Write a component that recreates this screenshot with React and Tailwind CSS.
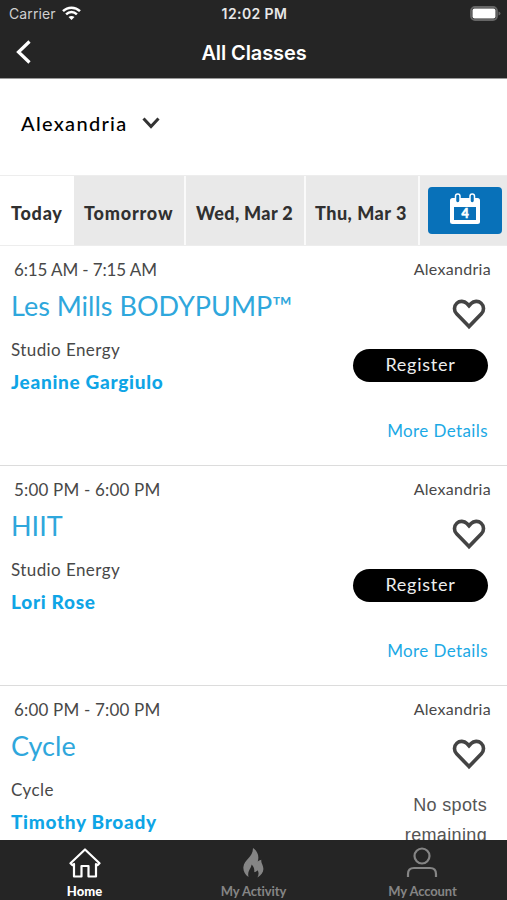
import React from "react";

const classes = [
  { time: "6:15 AM - 7:15 AM", timeGap: "tracking-[-0.12px]", name: "Les Mills BODYPUMP™", room: "Studio Energy", coach: "Jeanine Gargiulo", open: true },
  { time: "5:00 PM - 6:00 PM", timeGap: "tracking-[0.18px]", name: "HIIT", room: "Studio Energy", coach: "Lori Rose", open: true },
  { time: "6:00 PM - 7:00 PM", timeGap: "tracking-[0.18px]", name: "Cycle", room: "Cycle", coach: "Timothy Broady", open: false },
];

function Heart() {
  return (
    <svg className="mr-[5px] mt-[18px] h-[32px] w-[34px]" viewBox="0 0 34 32" fill="none" stroke="#444" strokeWidth="3.6" strokeLinejoin="miter">
      <path d="M17 28.6 4.6 15.8C1.7 12.7 1.8 8.1 4.8 5.3c2.9-2.7 7.4-2.500 10.1.3L17 7.800l2.100-2.200c2.700-2.800 7.200-3 10.100-.3 3 2.800 3.100 7.400.2 10.500Z" />
    </svg>
  );
}

function ClassRow({ item }) {
  return (
    <section className="flex h-[220px] shrink-0 justify-between border-b border-[#dcdcdc] pl-[11px] pr-[16px] text-[#484848]">
      <div className="flex flex-col whitespace-nowrap">
        <div className={"ml-[3px] mt-[13px] h-[22px] text-[17px] leading-[22px] " + item.timeGap}>{item.time}</div>
        <div className="mt-[8px] h-[34px] text-[27px] leading-[34px] text-[#2fa7dc]">{item.name}</div>
        <div className="mt-[16px] h-[22px] text-[17px] leading-[22px] tracking-[0.42px]">{item.room}</div>
        <div className="mt-[9px] h-[24px] text-[19px] font-black leading-[24px] tracking-[0.7px] text-[#0fa5e6]">{item.coach}</div>
      </div>
      <div className="flex flex-col items-end whitespace-nowrap">
        <div className="mt-[12px] h-[22px] text-[16px] leading-[22px] tracking-[0.3px]">Alexandria</div>
        <Heart />
        {item.open ? (
          <>
            <button className="mr-[3px] mt-[19px] h-[33px] w-[135px] rounded-full bg-black pb-[2px] text-[18px] leading-[31px] tracking-[0.75px] text-[#eee]">Register</button>
            <div className="mr-[3px] mt-[38px] h-[22px] text-[17px] leading-[22px] tracking-[0.4px] text-[#1ba9e5]">More Details</div>
          </>
        ) : (
          <div className="mr-[4px] mt-[20px] w-[100px] whitespace-normal text-right font-['Liberation_Sans',sans-serif] text-[18px] leading-[30px] tracking-[0.35px] text-[#555]">No spots remaining</div>
        )}
      </div>
    </section>
  );
}

export default function App() {
  return (
    <div className="flex h-[900px] w-[507px] flex-col overflow-hidden bg-white font-['Lato',sans-serif]">
      <header className="h-[79px] shrink-0 bg-[#252525] font-['Inter',sans-serif] text-white">
        <div className="grid h-[27px] grid-cols-3 items-center pl-[9px] pr-[8px] text-[14px]">
          <div className="flex items-center gap-[6px] text-[#d0d0d0]">
            <span className="tracking-[0.1px]">Carrier</span>
            <svg width="19" height="15" viewBox="0 0 19 15" fill="none" stroke="white" strokeWidth="2.500">
              <path d="M1 5.200c4.800-4.700 12.200-4.700 17 0M4.100 8.300c3.100-3 7.700-3 10.800 0" />
              <path d="m6.500 11 3 3 3-3c-1.700-1.500-4.300-1.500-6 0Z" fill="white" stroke="none" />
            </svg>
          </div>
          <div className="pl-px text-center font-semibold tracking-[0.4px] text-[#e8e8e8]">12:02 PM</div>
          <svg className="-mr-[2px] justify-self-end" width="31" height="15" viewBox="0 0 31 15">
            <rect x="1" y="1" width="26" height="13" rx="4" fill="none" stroke="#666" strokeWidth="1.800" />
            <rect x="2.500" y="2.500" width="23" height="10" rx="2" fill="white" />
            <path d="M28.500 5.500v4q2-.6 2-2t-2-2" fill="#666" />
          </svg>
        </div>
        <div className="grid h-[51px] grid-cols-[60px_1fr_60px] items-center">
          <svg className="ml-[15px] -mt-[2px]" width="18" height="26" viewBox="0 0 18 26" fill="none" stroke="white" strokeWidth="3.200">
            <path d="M14.500 2.500 3.500 13l11 10.500" />
          </svg>
          <h1 className="pl-px text-center text-[20px] font-semibold tracking-[-0.1px]">All Classes</h1>
        </div>
        <div className="h-px bg-[#999]" />
      </header>
      <div className="flex h-[96px] shrink-0 items-center pb-[9px] pl-[21px] text-black">
        <span className="text-[20px] font-medium tracking-[1.300px]">Alexandria</span>
        <svg className="ml-[14px]" width="18" height="12" viewBox="0 0 18 12" fill="none" stroke="#333" strokeWidth="3">
          <path d="m1.500 1.500 7.500 8 7.500-8" />
        </svg>
      </div>
      <nav className="flex h-[71px] shrink-0 whitespace-nowrap border-y border-[#ededed] bg-[#e9e9e9] text-[18px] font-black text-[#303030]">
        <div className="flex w-[74px] items-center bg-white pl-[11px] pt-[5px] tracking-[0.75px]">Today</div>
        <div className="flex w-[112px] items-center border-r-2 border-[#fafafa] pl-[10px] pt-[5px] tracking-[0.8px]">Tomorrow</div>
        <div className="flex w-[120px] items-center border-r-2 border-[#fafafa] pl-[10px] pt-[5px] tracking-[0.35px]">Wed, Mar 2</div>
        <div className="flex w-[114px] items-center border-r-2 border-[#fafafa] pl-[9px] pt-[5px] tracking-[0.5px]">Thu, Mar 3</div>
        <div className="flex flex-1 items-center pl-[8px]">
          <button className="flex h-[47px] w-[74px] items-center justify-center rounded-[4px] bg-[#0871b9]">
            <svg className="-mt-[3px]" width="32" height="32" viewBox="0 0 32 32">
              <rect x="1" y="5" width="30" height="26" rx="2.500" fill="white" />
              <rect x="5" y="14" width="22" height="13" fill="#0871b9" />
              <rect x="6.500" y="1" width="4.500" height="9" rx="2.200" fill="#0871b9" stroke="white" strokeWidth="1.500" />
              <rect x="21" y="1" width="4.500" height="9" rx="2.200" fill="#0871b9" stroke="white" strokeWidth="1.500" />
              <text x="16" y="25" textAnchor="middle" fontSize="12.500" fontWeight="900" fill="white" stroke="white" strokeWidth=".5">4</text>
            </svg>
          </button>
        </div>
      </nav>
      <main className="flex min-h-0 flex-1 flex-col overflow-hidden">
        {classes.map((item) => <ClassRow key={item.time} item={item} />)}
      </main>
      <footer className="grid h-[60px] shrink-0 grid-cols-3 bg-[#252525] text-[13px] font-bold text-[#858585]">
        <div className="flex flex-col items-center pt-[8px] text-white">
          <svg width="32" height="30" viewBox="0 0 32 30" fill="none" stroke="white" strokeWidth="2.200" strokeLinejoin="round">
            <path d="M16 1.500 1.500 15.200l2 2L5 16v12.500h7.500V18h7v10.500H27V16l1.500 1.200 2-2Z" />
          </svg>
          <span className="mt-[5px] font-black leading-[16px]">Home</span>
        </div>
        <div className="flex flex-col items-center pt-[8px]">
          <svg width="24" height="30" viewBox="0 0 24 30" fill="#858585">
            <path d="M11 0c4.500 3 6.500 8 4.700 13.500 1.300-.8 3-1.700 3.700-1.700-.8 3 2 5 2 9.200 0 3.500-2.500 6.300-6 8.500 1.500-2.500 1.500-5.300.2-7.300-1 1.200-2 1.700-3.400 2 .5-3.200-.5-5.700-2.700-7.700C9.500 20.500 5 22.500 6.500 29 3 26.500 1 23 1.400 19 2 11.500 11 9.500 11 0Z" />
          </svg>
          <span className="mt-[5px] leading-[16px] tracking-[-0.1px]">My Activity</span>
        </div>
        <div className="flex flex-col items-center pt-[7px]">
          <svg className="-ml-[2px]" width="32" height="31" viewBox="0 0 32 31" fill="none" stroke="#858585" strokeWidth="2.200">
            <circle cx="16" cy="9" r="7.500" />
            <path d="M2 30v-3q0-6 6-6h16q6 0 6 6v3" />
          </svg>
          <span className="mt-[5px] leading-[16px] tracking-[-0.1px]">My Account</span>
        </div>
      </footer>
    </div>
  );
}
